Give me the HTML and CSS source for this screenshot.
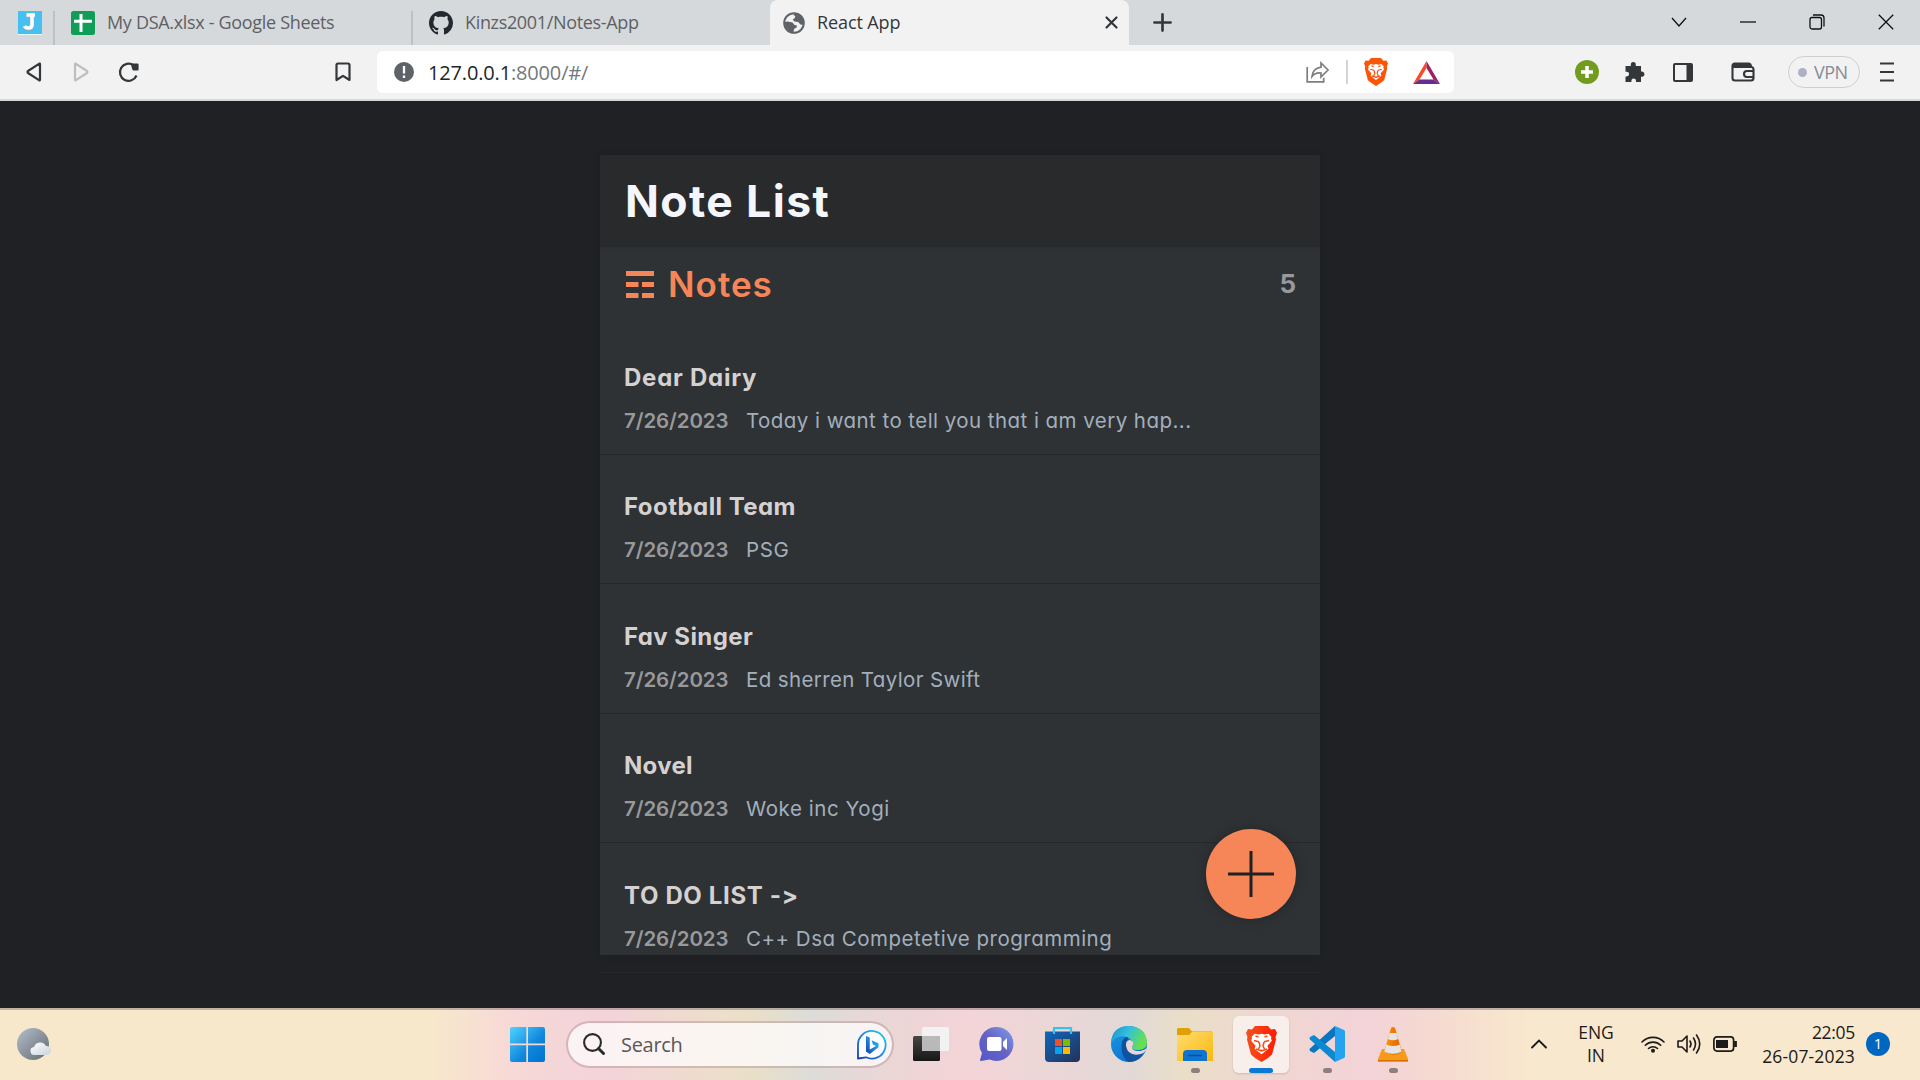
FILE: index.html
```html
<!DOCTYPE html>
<html lang="en">
<head>
<meta charset="utf-8">
<title>React App</title>
<link rel="stylesheet" href="styles.css">
</head>
<body>
<svg class="defs" width="0" height="0">
  <defs>
    <linearGradient id="win" x1="0" y1="0" x2="1" y2="1"><stop offset="0" stop-color="#4fd3ff"/><stop offset=".6" stop-color="#0f86dc"/><stop offset="1" stop-color="#0272d0"/></linearGradient>
    <linearGradient id="moon" x1="0" y1="0" x2="1" y2="1"><stop offset="0" stop-color="#b4bfcb"/><stop offset="1" stop-color="#636a70"/></linearGradient>
    <linearGradient id="cloud" x1="0" y1="0" x2="1" y2="1"><stop offset="0" stop-color="#fff"/><stop offset="1" stop-color="#c9d2dc"/></linearGradient>
    <linearGradient id="bing" x1="0" y1="1" x2="1" y2="0"><stop offset="0" stop-color="#163ea8"/><stop offset=".5" stop-color="#2187e8"/><stop offset="1" stop-color="#22cfea"/></linearGradient>
    <linearGradient id="chat" x1="0" y1="1" x2="1" y2="0"><stop offset="0" stop-color="#5058cc"/><stop offset=".5" stop-color="#6763c4"/><stop offset="1" stop-color="#7fa0ee"/></linearGradient>
    <linearGradient id="store" x1="0" y1="0" x2="1" y2="1"><stop offset="0" stop-color="#0f68bd"/><stop offset="1" stop-color="#243156"/></linearGradient>
    <linearGradient id="edgeTop" x1="0" y1="0" x2="1" y2=".4"><stop offset="0" stop-color="#1a8cd4"/><stop offset=".5" stop-color="#35c1da"/><stop offset="1" stop-color="#68e04c"/></linearGradient>
    <linearGradient id="edgeLow" x1="0" y1="0" x2=".6" y2="1"><stop offset="0" stop-color="#1b9de2"/><stop offset="1" stop-color="#0a6fd0"/></linearGradient>
    <linearGradient id="folder" x1="0" y1="0" x2="1" y2="1"><stop offset="0" stop-color="#ffdc70"/><stop offset="1" stop-color="#f9b90c"/></linearGradient>
    <linearGradient id="brave" x1="0" y1="0" x2="1" y2="0"><stop offset="0" stop-color="#f4511e"/><stop offset="1" stop-color="#ff1c00"/></linearGradient>
    <linearGradient id="cone" x1="0" y1="0" x2="1" y2="0"><stop offset="0" stop-color="#ff9a1f"/><stop offset=".5" stop-color="#f07a00"/><stop offset="1" stop-color="#d96200"/></linearGradient>
    <linearGradient id="dark" x1="0" y1="0" x2="0" y2="1"><stop offset="0" stop-color="#474747"/><stop offset="1" stop-color="#161616"/></linearGradient>
    <g id="lion-face"><path d="M5.500 8l3-3.200 4 .8 3-.8 3 .8 4-.8 3 3.200-.6 1.200 1 2.500-4.400 5 .9 3-3.900 3.300-3 2.200-3-2.200-3.900-3.300.9-3-4.400-5 1-2.500z" fill="#fff"/><path d="M8 11.500l5 1.300M23 11.500l-5 1.300M13 13l1 4-1.500 3M18 13l-1 4 1.500 3M10 20l5.500 2 5.500-2M15.500 20.500v2M9.500 7l3 1M21.500 7l-3 1" fill="none" stroke="#fb4a16" stroke-width="1.500"/></g>
  </defs>
</svg>

<header class="tabs">
  <svg class="favicon pinned" viewBox="0 0 24 24"><path fill="#45c0f0" d="M0 0h24v23H0z"/><path fill="#e8f7fd" d="M0 23h24v1H0z"/><path d="M8.500 4.500H17M14 4.500v9.500q0 3.500-3.500 3.500-3 0-4-2" fill="none" stroke="#9aaab5" stroke-width="4.500"/><path d="M8.500 4H17M14 4v9.500q0 3.500-3.500 3.500-3 0-4-2" fill="none" stroke="#fff" stroke-width="3.600"/></svg>
  <div class="tab tab-sheets">
    <svg class="favicon" viewBox="0 0 24 24"><rect width="24" height="24" rx="2.500" fill="#109d58"/><path d="M3 10.300h18M10 3v18" stroke="#fff" stroke-width="3"/></svg>
    <span class="tab-name name-sheets">My DSA.xlsx - Google Sheets</span>
  </div>
  <div class="tab tab-github">
    <svg class="favicon" viewBox="0 0 16 16"><path fill="#24292f" d="M8 0C3.580 0 0 3.580 0 8c0 3.540 2.290 6.530 5.470 7.590.4.070.55-.17.55-.38 0-.19-.01-.82-.01-1.490-2.010.37-2.530-.49-2.690-.94-.09-.23-.48-.94-.82-1.130-.28-.15-.68-.52-.01-.53.63-.01 1.080.58 1.230.82.72 1.210 1.870.87 2.330.66.07-.52.28-.87.51-1.070-1.780-.2-3.640-.89-3.640-3.950 0-.87.31-1.590.82-2.150-.08-.2-.36-1.020.08-2.120 0 0 .67-.21 2.200.82.64-.18 1.320-.27 2-.27s1.360.09 2 .27c1.530-1.040 2.200-.82 2.200-.82.44 1.100.16 1.920.08 2.120.51.56.82 1.270.82 2.150 0 3.070-1.870 3.750-3.650 3.950.29.25.54.73.54 1.480 0 1.070-.01 1.930-.01 2.200 0 .21.15.46.55.38A8.010 8.010 0 0016 8c0-4.420-3.580-8-8-8z"/></svg>
    <span class="tab-name name-github">Kinzs2001/Notes-App</span>
  </div>
  <div class="tab tab-active">
    <svg class="globe" viewBox="0 0 22 22"><circle cx="11" cy="11" r="9.800" fill="#f2f2f2" stroke="#5f6368" stroke-width="2"/><path fill="#5f6368" d="M12 1l5 2 3.500 5 .3 5-3.500-.5-2-2.500-4-.5-1.500-2 2-1.500.5-2-2-1zM1.500 10l3-.5 5 1 2 2.500 2.500.5-.5 2-2.500 1.500-.5 3.500-4-1-4-5z"/></svg>
    <span class="tab-name name-react">React App</span>
    <svg class="tab-close" viewBox="0 0 13 13"><path d="M1.500 1.500l10 10M11.500 1.500l-10 10" stroke="#33373a" stroke-width="2.200" stroke-linecap="round"/></svg>
  </div>
  <svg class="tab-new" viewBox="0 0 20 20"><path d="M10 1.500v17M1.500 10h17" stroke="#33373a" stroke-width="2.800" stroke-linecap="round"/></svg>
  <div class="window-controls">
    <svg viewBox="0 0 16 16"><path d="M1 4l7 8 7-8"/></svg>
    <svg viewBox="0 0 16 16"><path d="M0 8h16"/></svg>
    <svg viewBox="0 0 16 16"><rect x="1" y="3.500" width="11.500" height="11.500" rx="2"/><path d="M4 1h8q3 0 3 3v8.500"/></svg>
    <svg viewBox="0 0 16 16"><path d="M.8.800l14.400 14.400M15.200.8L.8 15.200"/></svg>
  </div>
</header>

<nav class="toolbar">
  <svg class="nav-icon back" viewBox="0 0 16 20"><path d="M14 2.200v15.600q0 1-1 .4L2 11q-1-1 0-2L13 1.800q1-.6 1 .4z"/></svg>
  <svg class="nav-icon forward" viewBox="0 0 16 20"><path d="M2 2.200v15.600q0 1 1 .4L14 11q1-1 0-2L3 1.800q-1-.6-1 .4z"/></svg>
  <svg class="nav-icon reload" viewBox="0 0 22 20"><path d="M18.500 13.500A8.600 8.600 0 1 1 15.500 3.200"/><path d="M14 2.500h5.500v5h-4z" fill="#33373a"/></svg>
  <svg class="nav-icon bookmark" viewBox="0 0 16 20"><path d="M1.500 3q0-1.500 1.500-1.500h10q1.500 0 1.500 1.500v15L8 13.800 1.500 18z"/></svg>
  <div class="address">
    <svg class="info" viewBox="0 0 20 20"><circle cx="10" cy="10" r="10" fill="#5f6368"/><path d="M10 4v7.500M10 13.500v2.500" stroke="#fff" stroke-width="2.300"/></svg>
    <span class="url"><b>127.0.0.1</b>:8000/#/</span>
    <svg class="share" viewBox="0 0 23 22"><path d="M1.200 6v14.800h16.500v-4M6 15.500q.5-8 9-9.300V2l7 7-7 7v-4q-6-.5-9 3.500z" fill="none" stroke="#7c7e80" stroke-width="1.700"/></svg>
    <i class="address-divider"></i>
    <svg class="brave-small" viewBox="0 0 31 36"><path fill="#fb5607" d="M9 0h13l3 3.500 4-.5 2 4-1.500 4 .5 2.500-4 15-4 3.500-6.500 4-6.500-4-4-3.500-4-15L1.500 11 0 7l2-4 4 .5z"/><use href="#lion-face" transform="translate(0 3)"/></svg>
    <svg class="bat" viewBox="0 0 27 23"><path fill="#ff4724" d="M13.500 0v7L6.500 18.500 0 23z"/><path fill="#9e1f63" d="M13.500 0L27 23l-6.500-4.500L13.500 7z"/><path fill="#662d91" d="M0 23l6.500-4.500h14L27 23z"/></svg>
  </div>
  <svg class="ext-add" viewBox="0 0 24 24"><circle cx="12" cy="12" r="12" fill="#729c1f"/><path d="M12 6v12M6 12h12" stroke="#fff" stroke-width="3.500"/></svg>
  <svg class="ext-puzzle" viewBox="0 0 22 22"><path fill="#33373a" d="M1.500 5h5.300V3.500a2.500 2.500 0 0 1 5 0V5H17v5.500h1.300a2.700 2.700 0 0 1 0 5.300H17V21h-5v-1.300a2.300 2.300 0 0 0-4.600 0V21H1.500v-5.500h1.200a2.400 2.400 0 0 0 0-4.800H1.500z"/></svg>
  <svg class="ext-panel" viewBox="0 0 20 19"><path fill="#33373a" d="M2 0h16q2 0 2 2v15q0 2-2 2H2q-2 0-2-2V2q0-2 2-2zm0 2v15h11.500V2z" fill-rule="evenodd"/></svg>
  <svg class="ext-wallet" viewBox="0 0 24 20"><path d="M1.500 4v12q0 2.500 2.500 2.500h16q2.500 0 2.500-2.500V7.500Q22.500 5 20 5H2M1.500 4q0-2.500 2.500-2.500h13.500q2.500 0 2.500 3.500M2 3.500h17M22.500 9H16a3 3 0 0 0 0 6h6.500" fill="none" stroke="#33373a" stroke-width="2.100"/></svg>
  <span class="vpn"><i></i>VPN</span>
  <svg class="menu" viewBox="0 0 14 20"><path d="M0 1.500h14M0 10h14M0 18.500h14" stroke="#33373a" stroke-width="2.200"/></svg>
</nav>

<main class="page">
  <section class="panel">
    <header class="app-header"><h1>Note List</h1></header>
    <div class="notes-header">
      <svg class="notes-icon" viewBox="0 0 28 27"><path d="M0 2.500h28M0 13.500h12.500M16 13.500h12M0 24.500h12.500M16 24.500h12" stroke="#f68657" stroke-width="5"/></svg>
      <h2>Notes</h2>
      <span class="count">5</span>
    </div>
    <div class="list">
      <article class="note"><h3 class="t1">Dear Dairy</h3><p><span class="date">7/26/2023</span><span class="b1">Today i want to tell you that i am very hap...</span></p></article>
      <article class="note"><h3 class="t2">Football Team</h3><p><span class="date">7/26/2023</span><span class="b2">PSG</span></p></article>
      <article class="note"><h3 class="t3">Fav Singer</h3><p><span class="date">7/26/2023</span><span class="b3">Ed sherren Taylor Swift</span></p></article>
      <article class="note"><h3 class="t4">Novel</h3><p><span class="date">7/26/2023</span><span class="b4">Woke inc Yogi</span></p></article>
      <article class="note"><h3 class="t5">TO DO LIST -&gt;</h3><p><span class="date">7/26/2023</span><span class="b5">C++ Dsa Competetive programming</span></p></article>
    </div>
    <button class="add" aria-label="Add note"><svg viewBox="0 0 46 46"><path d="M23 0v46M0 23h46" stroke="#1f2124" stroke-width="3"/></svg></button>
  </section>
</main>

<footer class="taskbar">
  <svg class="weather" viewBox="0 0 34 32"><circle cx="16" cy="16" r="16" fill="url(#moon)"/><path fill="url(#cloud)" d="M18 27a4 4 0 0 1-1-8 6.500 6.500 0 0 1 12-1 4.500 4.500 0 0 1 1 9z"/></svg>
  <svg class="start" viewBox="0 0 35 35"><path fill="url(#win)" d="M2 0h14.300v16.500H0V2q0-2 2-2zM18 0h15q2 0 2 2v14.500H18zM0 18.200h16.300V35H2q-2 0-2-2zM18 18.200h17V33q0 2-2 2H18z"/></svg>
  <div class="search">
    <svg class="search-icon" viewBox="0 0 22 22"><circle cx="9.500" cy="9.500" r="8.400" fill="none" stroke="#2a2a2a" stroke-width="2.100"/><path d="M15.500 15.500l5 5" stroke="#2a2a2a" stroke-width="3" stroke-linecap="round"/></svg>
    <span>Search</span>
    <svg class="bing" viewBox="0 0 31 31"><path d="M2 29.500V16a13.800 13.800 0 1 1 8 12.300z" fill="#fdfdff" stroke="url(#bing)" stroke-width="1.800" stroke-linejoin="round"/><path d="M10 7l3.800 1.500v12L20 17l-3-1.400-1.500-4.300 7 3v4L13.800 25 10 22.500z" fill="url(#bing)"/></svg>
  </div>
  <svg class="taskview" viewBox="0 0 36 34"><rect y="9" width="27" height="25" rx="1.500" fill="url(#dark)"/><rect x="9" width="27" height="24" rx="1.500" fill="#f2f2f2"/><path fill="#b9b9b9" d="M9 9h18v15H9z"/></svg>
  <svg class="chat" viewBox="0 0 34 34"><path fill="url(#chat)" d="M17 0a17 17 0 1 1-7.500 32.500L1 34q-1.500 0-.8-1.500L2 26A17 17 0 0 1 17 0z"/><rect x="7" y="10" width="14.500" height="14" rx="2" fill="#fff"/><path fill="#fff" d="M23 15l4-4v12l-4-4z"/></svg>
  <svg class="store" viewBox="0 0 35 35"><path d="M9 7V1.200h17V7" fill="none" stroke="#35c3ee" stroke-width="2.200"/><path fill="url(#store)" d="M0 4.500h35V31q0 4-4 4H4q-4 0-4-4z"/><path d="M9 4v3M26 4v3" stroke="#35c3ee" stroke-width="2.200"/><path fill="#f25022" d="M10 12h7v7h-7z"/><path fill="#7fba00" d="M18 12h7v7h-7z"/><path fill="#00a4ef" d="M10 20h7v7h-7z"/><path fill="#ffb900" d="M18 20h7v7h-7z"/></svg>
  <svg class="edge" viewBox="0 0 36 36"><circle cx="18" cy="18" r="18" fill="url(#edgeLow)"/><path fill="#10529e" d="M10.500 20q0-9 8-10L16 16q-2 8 6 11 5 1.500 11-2-4 11-15 11-7.500-4-7.500-16z"/><path fill="url(#edgeTop)" d="M0 17Q1 0 18 0q17 1 18 16 0 8-9 8-8 0-5.500-4Q23 14 16 11 6 8 0 17z"/><path fill="#e9d5d3" d="M15 20q-.5-6 4-6 4 1 3 5-2 2-.5 4 2 2.500 8 2 4-1 6.500-3-1 4-6 6-13 3-15-8z"/></svg>
  <div class="app running"><svg class="explorer" viewBox="0 0 36 33"><path fill="#e0a008" d="M1.500 0H12l3 3.500H35V12H0V1.500Q0 0 1.500 0z"/><path fill="url(#folder)" d="M0 7h12l3-3h21v29H0z"/><path fill="#0f74cf" d="M6 33v-7q0-4 4-4h16q4 0 4 4v7z"/><path d="M11 27.500h14" stroke="#0b4f9c" stroke-width="1.500"/></svg></div>
  <div class="app current"><svg class="brave-big" viewBox="0 0 31 36"><path fill="url(#brave)" d="M9 0h13l3 3.500 4-.5 2 4-1.500 4 .5 2.500-4 15-4 3.500-6.500 4-6.500-4-4-3.500-4-15L1.500 11 0 7l2-4 4 .5z"/><use href="#lion-face" transform="translate(0 3)"/></svg></div>
  <div class="app running"><svg class="vscode" viewBox="0 0 36 36"><path fill="#0b76bd" d="M26 0v10L5 27l-4-2q-1-1.500 0-2.500z"/><path fill="#0b8ad4" d="M1 11l4-2 21 17v10L1 13.500q-1-1 0-2.500z"/><path fill="#25a2f0" d="M26 0l9 4q1 .5 1 2v24q0 1.500-1 2l-9 4z"/></svg></div>
  <div class="app running"><svg class="vlc" viewBox="0 0 30 35"><path fill="#f79a1a" d="M4 22h22l4 10v2.500H0V32z"/><path fill="#d96f00" d="M0 33h30v1.500H0z"/><path fill="url(#cone)" d="M13 1q2-2 4 0l7 24q-9 6-18 0z"/><path fill="#e6e4e2" d="M11.600 6h6.800l1.700 6q-5 2.500-10.200 0zM8.300 17.500q6.500 3 13.400 0l2 7.200q-8.500 4-17.300 0z"/></svg></div>
  <svg class="tray-chevron" viewBox="0 0 16 10"><path d="M1 8.500l7-7 7 7" fill="none" stroke="#1c1b19" stroke-width="1.900" stroke-linecap="round"/></svg>
  <div class="lang"><span>ENG</span><span>IN</span></div>
  <svg class="wifi" viewBox="0 0 24 18"><g fill="none" stroke="#1c1b19" stroke-width="1.600" stroke-linecap="round"><path d="M1 7a15.500 15.500 0 0 1 22 0M4.300 10.300a11 11 0 0 1 15.400 0M7.500 13.500a6.500 6.500 0 0 1 9 0"/></g><circle cx="12" cy="15.800" r="2" fill="#1c1b19"/></svg>
  <svg class="sound" viewBox="0 0 24 20"><path d="M1 7h4l5-5v16l-5-5H1zM13 7q2 3 0 6M16.500 4q4 6 0 12M19.500 1q6.500 9 0 18" fill="none" stroke="#1c1b19" stroke-width="1.600" stroke-linecap="round" stroke-linejoin="round"/></svg>
  <svg class="battery" viewBox="0 0 24 16"><rect x=".9" y=".9" width="19.700" height="14.200" rx="3" fill="none" stroke="#1c1b19" stroke-width="1.700"/><rect x="3" y="4" width="12" height="8" fill="#1c1b19"/><path d="M22.500 5v6" stroke="#1c1b19" stroke-width="2.800"/></svg>
  <div class="clock"><span class="time">22:05</span><span class="day">26-07-2023</span></div>
  <span class="badge">1</span>
</footer>
</body>
</html>
```
FILE: styles.css
```css
* { box-sizing: border-box; }
body { margin: 0; width: 1920px; height: 1080px; overflow: hidden; display: flex; flex-direction: column; background: #1f2124; font-family: "Open Sans", "Noto Sans", sans-serif; }
svg { display: block; flex: none; overflow: visible; }
.defs { position: absolute; }
h1, h2, h3, p { margin: 0; }

.tabs { display: flex; height: 45px; background: #d5d9dc; align-items: center; }
.favicon { width: 24px; height: 24px; }
.pinned { margin: 0 11px 0 18px; }
.tab { display: flex; align-items: center; height: 45px; white-space: nowrap; }
.tab-name { font-size: 18px; line-height: 24px; color: #5d6164; margin-left: 12px; padding-bottom: 2px; }
.tab-sheets, .tab-github { height: 34px; border-left: 2px solid #bdc1c4; margin-top: 11px; padding: 0 0 11px 16px; }
.tab-sheets { width: 358px; }
.tab-github { width: 359px; }
.name-sheets { letter-spacing: -.32px; }
.name-github { letter-spacing: -.34px; }
.name-react { letter-spacing: -.1px; color: #33373a; }
.tab-active { width: 359px; background: #f2f2f2; border-radius: 8px 8px 0 0; padding: 0 11px 0 13px; }
.globe { width: 22px; height: 22px; }
.tab-close { width: 13px; height: 13px; margin-left: auto; }
.tab-new { width: 19px; height: 19px; margin-left: 24px; }
.window-controls { display: flex; gap: 53px; margin: 0 26px 2px auto; }
.window-controls svg { width: 16px; height: 16px; fill: none; stroke: #111; stroke-width: 1.3; }

.toolbar { display: flex; align-items: center; height: 56px; background: #f2f2f2; border-bottom: 2px solid #d5d9dc; }
.nav-icon { height: 20px; width: 16px; fill: none; stroke: #33373a; stroke-width: 2.2; stroke-linejoin: round; }
.back { margin-left: 26px; }
.forward { margin-left: 31px; stroke: #bcbec0; }
.reload { width: 22px; margin-left: 29px; }
.bookmark { margin-left: 195px; }
.address { display: flex; align-items: center; width: 1077px; height: 42px; margin-left: 26px; border-radius: 6px; background: #fff; padding: 0 14px 0 17px; }
.info { width: 20px; height: 20px; }
.url { font-size: 20px; letter-spacing: -.16px; margin-left: 14px; color: #75787b; }
.url b { font-weight: 400; color: #222528; }
.share { width: 23px; height: 22px; margin-left: auto; }
.address-divider { width: 2px; height: 24px; margin: 0 16px 0 17px; background: #d2d4d6; }
.brave-small { width: 24px; height: 28px; }
.bat { width: 27px; height: 23px; margin-left: 25px; }
.ext-add { width: 24px; height: 24px; margin-left: 121px; }
.ext-puzzle { width: 22px; height: 22px; margin-left: 25px; }
.ext-panel { width: 20px; height: 19px; margin-left: 27px; }
.ext-wallet { width: 24px; height: 20px; margin-left: 38px; }
.vpn { display: flex; align-items: center; gap: 7px; width: 72px; height: 32px; margin-left: 33px; padding-left: 9px; border: 1.5px solid #cdd0d3; border-radius: 16px; color: #858c97; font-size: 18px; letter-spacing: -.5px; }
.vpn i { width: 9px; height: 9px; border-radius: 50%; background: #aeb0c4; }
.menu { width: 14px; height: 20px; margin-left: 20px; }

.page { height: 907px; padding-top: 54px; display: flex; justify-content: center; align-items: flex-start; font-family: Inter, "Open Sans", sans-serif; font-feature-settings: "cv11", "calt" 0; }
.panel { position: relative; width: 720px; height: 800px; background: #2e3235; box-shadow: 0 0 8px rgba(0,0,0,.08); }
.app-header { height: 92px; padding: 18px 0 0 25px; background: #292a2c; box-shadow: 0 1px 3px rgba(0,0,0,.06); }
h1 { color: #f4f6fb; font-size: 44.5px; line-height: 56px; font-weight: 700; letter-spacing: 1.4px; }
.notes-header { display: flex; align-items: center; height: 78px; padding: 0 24px 4px 26px; }
.notes-icon { width: 28px; height: 27px; }
h2 { color: #f68657; font-size: 35px; line-height: 44px; font-weight: 600; margin-left: 14px; letter-spacing: 1px; }
.count { color: #999; font-size: 26px; font-weight: 700; margin-left: auto; padding-bottom: 2px; }
.note { height: 129.6px; padding: 37.5px 0 0 24px; border-bottom: 1px solid #25282b; }
h3 { color: #d6d1d1; font-size: 24px; line-height: 30px; font-weight: 700; white-space: nowrap; }
.t1 { letter-spacing: .75px; }
.t2 { letter-spacing: .45px; }
.t3 { letter-spacing: .42px; }
.t4 { letter-spacing: .3px; }
.t5 { letter-spacing: .65px; }
.note p { display: flex; margin-top: 15px; font-size: 20.5px; line-height: 26px; color: #a3afbc; white-space: nowrap; }
.date { width: 122px; color: #999; font-weight: 600; letter-spacing: -.1px; }
.b1 { letter-spacing: .45px; }
.b2 { letter-spacing: .6px; }
.b3 { letter-spacing: .37px; }
.b4 { letter-spacing: .55px; }
.b5 { letter-spacing: .5px; }
.add { position: absolute; right: 24px; bottom: 36px; width: 90px; height: 90px; padding: 22px; border: 0; border-radius: 50%; background: #f68657; box-shadow: 0 0 12px rgba(0,0,0,.25); }
.add svg { width: 46px; height: 46px; }

.taskbar { display: flex; align-items: center; height: 72px; padding-bottom: 2px; border-top: 2px solid rgba(90,80,85,.35); background: linear-gradient(90deg, #f8e8cb 0, #f8e8cb 430px, #f7d9d6 510px, #f3d3d9 600px, #ecdfca 730px, #e9dfc9 755px, #dddcd8 810px, #eed5d5 910px, #f4d4d7 970px, #e2d9d6 1130px, #eadec8 1185px, #f0d6d3 1290px, #f3d3d7 1370px, #f6dcd0 1450px, #f8e8cd 1530px, #f8e8cd 1920px) 0 0 / 1920px 100%; }
.weather { width: 34px; height: 32px; margin-left: 17px; }
.start { width: 35px; height: 35px; margin-left: 459px; }
.search { display: flex; align-items: center; width: 328px; height: 47px; margin-left: 21px; padding: 0 5px 0 15px; border: 2px solid rgba(160,120,125,.35); border-radius: 24px; background: rgba(253,250,249,.82); background-clip: padding-box; color: #5b5655; font-size: 20px; }
.search-icon { width: 22px; height: 22px; }
.search span { margin-left: 16px; letter-spacing: -.3px; }
.bing { width: 31px; height: 31px; margin-left: auto; }
.taskview { width: 36px; height: 34px; margin-left: 19px; }
.chat { width: 34px; height: 34px; margin-left: 31px; }
.store { width: 35px; height: 35px; margin-left: 31px; }
.edge { width: 36px; height: 36px; margin-left: 31px; }
.app { display: flex; flex-direction: column; align-items: center; justify-content: space-between; width: 56px; height: 57px; padding-top: 10px; }
.app::after { content: ""; width: 9px; height: 5px; border-radius: 3px; background: #8c7f7d; }
.edge + .app { margin-left: 20px; }
.app + .app { margin-left: 10px; }
.explorer { width: 36px; height: 33px; margin-top: 2px; }
.current { background: rgba(250,244,243,.8); border-radius: 6px; box-shadow: 0 1px 2px rgba(120,80,80,.25); }
.current::after { width: 24px; background: #0a78d4; }
.brave-big { width: 31px; height: 36px; }
.vscode { width: 36px; height: 36px; }
.vlc { width: 30px; height: 35px; margin-top: 1px; }
.tray-chevron { width: 16px; height: 10px; margin-left: 110px; }
.lang { display: flex; flex-direction: column; align-items: center; width: 60px; margin-left: 19px; font-size: 17.500px; line-height: 23px; color: #1c1b19; letter-spacing: 0; }
.wifi { width: 24px; height: 18px; margin-left: 15px; }
.sound { width: 24px; height: 20px; margin-left: 12px; }
.battery { width: 24px; height: 16px; margin-left: 12px; }
.clock { display: flex; flex-direction: column; align-items: flex-end; width: 118px; font-size: 17.500px; line-height: 24px; color: #1c1b19; letter-spacing: -.3px; }
.day { letter-spacing: .15px; }
.badge { width: 24px; height: 24px; margin-left: 11px; border-radius: 50%; background: #0067c0; color: #fff; text-align: center; font-size: 15px; line-height: 23px; }
```
